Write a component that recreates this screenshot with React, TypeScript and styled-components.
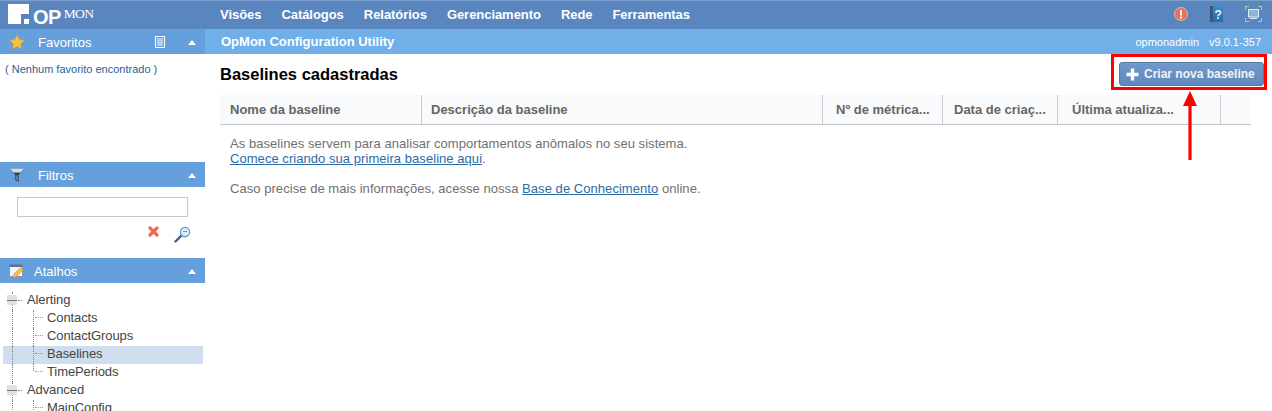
import React from "react";
import styled, { createGlobalStyle } from "styled-components";

const GlobalStyle = createGlobalStyle`
  html, body {
    margin: 0;
    padding: 0;
    background: #fff;
    font-family: "Liberation Sans", Arial, sans-serif;
    overflow: hidden;
  }
`;

const Page = styled.div`
  position: relative;
  width: 1272px;
  height: 411px;
  overflow: hidden;
  display: flex;
  flex-direction: column;
`;

const TopBar = styled.header`
  height: 29px;
  flex: none;
  display: flex;
  align-items: center;
  background: #5a86bf;
  border-top: 1px solid #7ba0cf;
  padding-bottom: 2px;
  box-sizing: border-box;
`;

const Logo = styled.div`
  width: 220px;
  flex: none;
  display: flex;
  align-items: center;
  padding-left: 8px;
  box-sizing: border-box;

  & > svg {
    margin-top: -1px;
  }
`;

const LogoOp = styled.span`
  font-size: 20px;
  line-height: 20px;
  font-weight: bold;
  color: #fff;
  margin-left: 4px;
  margin-top: 5px;
  letter-spacing: -0.6px;
`;

const LogoMon = styled.span`
  font-family: "Liberation Serif", serif;
  font-size: 13.5px;
  letter-spacing: -0.6px;
  color: #fff;
  margin-left: 3px;
  margin-top: -1px;
`;

const Nav = styled.nav`
  display: flex;
  gap: 20px;
  flex: 1;
`;

const NavItem = styled.a`
  color: #fff;
  font-size: 13px;
  font-weight: bold;
  letter-spacing: -0.05px;
`;

const TopIcons = styled.div`
  display: flex;
  align-items: center;
  padding-right: 10px;

  & > svg + svg {
    margin-left: 22px;
  }
`;

const Body = styled.div`
  flex: 1;
  display: flex;
  min-height: 0;
`;

const Sidebar = styled.aside`
  width: 205px;
  flex: none;
  display: flex;
  flex-direction: column;
  min-height: 0;
`;

const PanelHeader = styled.div`
  height: 25px;
  flex: none;
  display: flex;
  align-items: center;
  background: #659fdc;
  color: #fff;
  font-size: 13px;
  padding: 1px 9px 0 9px;
  box-sizing: border-box;
`;

const PanelIcon = styled.span<{ $gap: number }>`
  display: flex;
  width: 16px;
  margin-right: ${({ $gap }) => $gap}px;
`;

const PanelTitle = styled.span`
  flex: 1;
`;

const Caret = styled.span<{ $gap?: number }>`
  width: 0;
  height: 0;
  margin-left: ${({ $gap }) => $gap ?? 0}px;
  border-left: 4.5px solid transparent;
  border-right: 4.5px solid transparent;
  border-bottom: 5px solid #fff;
`;

const NoFavorites = styled.div`
  height: 108px;
  flex: none;
  box-sizing: border-box;
  padding: 9px 0 0 5px;
  font-size: 11px;
  color: #2a5f94;
`;

const FilterBody = styled.div`
  height: 71px;
  flex: none;
  box-sizing: border-box;
  padding: 10px 17px 0;
  display: flex;
  flex-direction: column;
`;

const FilterInput = styled.input`
  width: 171px;
  height: 20px;
  flex: none;
  box-sizing: border-box;
  border: 1px solid #c8c8c8;
  background: #fff;
  outline: none;
`;

const FilterActions = styled.div`
  display: flex;
  justify-content: flex-end;
  align-items: flex-start;
  gap: 15px;
  margin: 9px -3px 0 0;
`;

const Tree = styled.div`
  flex: none;
  padding: 9px 2px 0 3px;
  position: relative;
`;

const TreeRow = styled.div<{ $level: number; $selected?: boolean }>`
  position: relative;
  height: 18px;
  line-height: 16px;
  font-size: 13px;
  letter-spacing: -0.1px;
  color: #444;
  padding-left: ${({ $level }) => ($level === 0 ? 24 : 44)}px;
  background: ${({ $selected }) => ($selected ? "#cfdeee" : "transparent")};
`;

const TreeGuide = styled.span<{ $level: number; $last?: boolean }>`
  position: absolute;
  left: ${({ $level }) => ($level === 0 ? 9 : 30)}px;
  top: 0;
  height: ${({ $last }) => ($last ? "7px" : "18px")};
  border-left: 1px dotted #888;
`;

const TreeTick = styled.span`
  position: absolute;
  left: 32px;
  top: 7px;
  width: 8px;
  border-top: 1px dotted #999;
`;

const Minus = styled.span`
  position: absolute;
  left: 4px;
  top: 3px;
  width: 10px;
  height: 10px;
  background: #dde2e2;
  display: flex;
  align-items: center;

  &::before {
    content: "";
    width: 100%;
    height: 1px;
    background: #777;
  }

  &::after {
    content: "";
    position: absolute;
    left: 11px;
    top: 5px;
    width: 4px;
    border-top: 1px dotted #888;
  }
`;

const Main = styled.main`
  flex: 1;
  min-width: 0;
  display: flex;
  flex-direction: column;
`;

const UtilityBar = styled.div`
  height: 25px;
  flex: none;
  display: flex;
  align-items: center;
  justify-content: space-between;
  padding: 0 11px 0 16px;
  background: #70afe8;
  color: #fff;
`;

const UtilityTitle = styled.span`
  font-size: 13px;
  font-weight: bold;
`;

const UtilityMeta = styled.span`
  display: flex;
  gap: 10px;
  font-size: 11px;
`;

const Content = styled.div`
  padding: 7px 21px 0 15px;
`;

const TitleRow = styled.div`
  display: flex;
  align-items: center;
  justify-content: space-between;
  height: 26px;
  margin-right: -13px;
  margin-bottom: 8px;
`;

const Heading = styled.h1`
  margin: 0;
  font-size: 16.5px;
  font-weight: bold;
  color: #000;
`;

const NewButton = styled.button`
  width: 145px;
  height: 24px;
  display: flex;
  align-items: center;
  gap: 5px;
  padding: 0 0 0 6px;
  border: 1px solid #5577a3;
  border-radius: 3px;
  background: linear-gradient(#7099c9, #5f89bc);
  color: #eef3f9;
  font-family: inherit;
  font-size: 12px;
  font-weight: bold;
`;

const TableHead = styled.div`
  display: flex;
  height: 30px;
  background: #f8fafb;
  border-bottom: 1px solid #c5c5c5;
  box-sizing: border-box;
`;

const HeadCell = styled.div<{ $width: number; $pad: number }>`
  width: ${({ $width }) => $width}px;
  flex: none;
  box-sizing: border-box;
  padding-left: ${({ $pad }) => $pad}px;
  line-height: 29px;
  font-size: 13px;
  font-weight: bold;
  color: #666;
  border-right: 1px solid #c9cdd1;
  overflow: hidden;
  white-space: nowrap;

  &:last-child {
    border-right: none;
  }
`;

const Message = styled.div`
  padding: 11px 0 0 10px;
  font-size: 13px;
  letter-spacing: 0.05px;
  line-height: 15px;
  color: #707070;
`;

const Paragraph = styled.p`
  margin: 0 0 15px;
`;

const TextLink = styled.a`
  color: #2b6ca8;
  text-decoration: underline;
`;

const Highlight = styled.div`
  position: absolute;
  left: 1111px;
  top: 54px;
  width: 156px;
  height: 36px;
  box-sizing: border-box;
  border: 3px solid #f00;
`;

const Arrow = styled.svg`
  position: absolute;
  left: 1182px;
  top: 91px;
`;

const StarIcon = () => (
  <svg width="16" height="16" viewBox="0 0 16 16">
    <path d="M8 0.8l2.3 4.8 5.2.7-3.8 3.6.9 5.2L8 12.6l-4.6 2.5.9-5.2L.5 6.3l5.2-.7z" fill="#f3c246" stroke="#d99b2c" strokeWidth="0.6" />
  </svg>
);

const FunnelIcon = () => (
  <svg width="16" height="16" viewBox="0 0 16 16">
    <path d="M1 1.5h14l-5 6v7.5l-4-2V7.5z" fill="#2f4358" />
    <path d="M1 1.5h14l-3.5 4h-7z" fill="#d5dee6" />
    <path d="M6.5 8.5l3-.5v6l-3-1.5z" fill="#4f7fb0" />
  </svg>
);

const NoteIcon = () => (
  <svg width="16" height="16" viewBox="0 0 16 16">
    <rect x="0.5" y="1.5" width="13" height="12" fill="#f3f6fa" stroke="#8a9aad" />
    <rect x="0.5" y="1.5" width="13" height="2.5" fill="#4d76a8" />
    <path d="M4 15l1-4 6.5-6.5 2.5 2.5L7.5 13.5z" fill="#f2c14e" stroke="#c8872a" strokeWidth="0.5" />
  </svg>
);

const ListIcon = () => (
  <svg width="10" height="12" viewBox="0 0 10 12">
    <rect x="0.5" y="0.5" width="9" height="11" fill="none" stroke="#fff" />
    <path d="M2 3h6M2 5h6M2 7h6M2 9h6" stroke="#fff" />
  </svg>
);

const LogoMark = () => (
  <svg width="21" height="20" viewBox="0 0 21 20">
    <path d="M0 0h21v10h-8v10H0z" fill="#fff" />
    <rect x="16" y="15" width="5" height="5" fill="#fff" />
  </svg>
);

const AlertIcon = () => (
  <svg width="14" height="14" viewBox="0 0 14 14">
    <circle cx="7" cy="7" r="6.5" fill="#e8705f" stroke="#f0b0a6" />
    <rect x="6" y="3" width="2" height="5.5" fill="#fff" />
    <rect x="6" y="9.5" width="2" height="2" fill="#fff" />
  </svg>
);

const HelpIcon = () => (
  <svg width="13" height="16" viewBox="0 0 13 16">
    <defs>
      <linearGradient id="helpCover" x1="0" y1="0" x2="0" y2="1">
        <stop offset="0" stopColor="#3f8ccb" />
        <stop offset="1" stopColor="#1f6cae" />
      </linearGradient>
    </defs>
    <rect width="13" height="16" fill="url(#helpCover)" />
    <rect width="3" height="16" fill="#3a5878" />
    <text x="4.5" y="13" fontFamily="Liberation Sans" fontSize="12" fontWeight="bold" fill="#e8f2fa">?</text>
  </svg>
);

const ScreenIcon = () => (
  <svg width="17" height="16" viewBox="0 0 17 16" fill="none">
    <path d="M0.5 4V0.5H4M13 0.5h3.5V4M16.5 12v3.5H13M4 15.5H0.5V12" stroke="#b5d28a" strokeWidth="1" />
    <rect x="3.5" y="3.5" width="10" height="7.5" fill="#8fb4da" stroke="#e3ebf3" />
    <path d="M5 12.5h7" stroke="#dfe8f2" />
  </svg>
);

const ClearIcon = () => (
  <svg width="11" height="11" viewBox="0 0 11 11">
    <path d="M2 2l7 7M9 2l-7 7" stroke="#ea6a58" strokeWidth="3.2" strokeLinecap="round" />
  </svg>
);

const SearchIcon = () => (
  <svg width="17" height="17" viewBox="0 0 17 17">
    <path d="M1.5 15.5l6-6" stroke="#2f5f9a" strokeWidth="2.4" strokeLinecap="round" />
    <circle cx="11" cy="6" r="4.6" fill="#dcebf7" stroke="#6d97c4" strokeWidth="1.2" />
    <path d="M9 5.5h4" stroke="#6d97c4" />
  </svg>
);

const PlusIcon = () => (
  <svg width="13" height="13" viewBox="0 0 13 13">
    <path d="M6.5 0.5v12M0.5 6.5h12" stroke="#fff" strokeWidth="3.4" />
  </svg>
);

const menu = ["Visões", "Catálogos", "Relatórios", "Gerenciamento", "Rede", "Ferramentas"];

const columns = [
  { label: "Nome da baseline", width: 202, pad: 10 },
  { label: "Descrição da baseline", width: 401, pad: 9 },
  { label: "Nº de métrica...", width: 120, pad: 13 },
  { label: "Data de criaç...", width: 115, pad: 11 },
  { label: "Última atualiza...", width: 163, pad: 14 },
  { label: "", width: 30, pad: 0 },
];

const tree = [
  { label: "Alerting", level: 0 },
  { label: "Contacts", level: 1 },
  { label: "ContactGroups", level: 1 },
  { label: "Baselines", level: 1, selected: true },
  { label: "TimePeriods", level: 1, last: true },
  { label: "Advanced", level: 0 },
  { label: "MainConfig", level: 1 },
];

const App = () => (
  <>
    <GlobalStyle />
    <Page>
      <TopBar>
        <Logo>
          <LogoMark />
          <LogoOp>OP</LogoOp>
          <LogoMon>MON</LogoMon>
        </Logo>
        <Nav>
          {menu.map((item) => (
            <NavItem key={item}>{item}</NavItem>
          ))}
        </Nav>
        <TopIcons>
          <AlertIcon />
          <HelpIcon />
          <ScreenIcon />
        </TopIcons>
      </TopBar>
      <Body>
        <Sidebar>
          <PanelHeader>
            <PanelIcon $gap={13}>
              <StarIcon />
            </PanelIcon>
            <PanelTitle>Favoritos</PanelTitle>
            <ListIcon />
            <Caret $gap={23} />
          </PanelHeader>
          <NoFavorites>( Nenhum favorito encontrado )</NoFavorites>
          <PanelHeader>
            <PanelIcon $gap={13}>
              <FunnelIcon />
            </PanelIcon>
            <PanelTitle>Filtros</PanelTitle>
            <Caret />
          </PanelHeader>
          <FilterBody>
            <FilterInput />
            <FilterActions>
              <ClearIcon />
              <SearchIcon />
            </FilterActions>
          </FilterBody>
          <PanelHeader>
            <PanelIcon $gap={9}>
              <NoteIcon />
            </PanelIcon>
            <PanelTitle>Atalhos</PanelTitle>
            <Caret />
          </PanelHeader>
          <Tree>
            {tree.map((row) => (
              <TreeRow key={row.label} $level={row.level} $selected={row.selected}>
                <TreeGuide $level={0} />
                {row.level === 0 ? (
                  <Minus />
                ) : (
                  <>
                    <TreeGuide $level={1} $last={row.last} />
                    <TreeTick />
                  </>
                )}
                {row.label}
              </TreeRow>
            ))}
          </Tree>
        </Sidebar>
        <Main>
          <UtilityBar>
            <UtilityTitle>OpMon Configuration Utility</UtilityTitle>
            <UtilityMeta>
              <span>opmonadmin</span>
              <span>v9.0.1-357</span>
            </UtilityMeta>
          </UtilityBar>
          <Content>
            <TitleRow>
              <Heading>Baselines cadastradas</Heading>
              <NewButton>
                <PlusIcon />
                Criar nova baseline
              </NewButton>
            </TitleRow>
            <TableHead>
              {columns.map((col, i) => (
                <HeadCell key={i} $width={col.width} $pad={col.pad}>
                  {col.label}
                </HeadCell>
              ))}
            </TableHead>
            <Message>
              <Paragraph>
                As baselines servem para analisar comportamentos anômalos no seu sistema.
                <br />
                <TextLink>Comece criando sua primeira baseline aqui</TextLink>.
              </Paragraph>
              <Paragraph>
                Caso precise de mais informações, acesse nossa <TextLink>Base de Conhecimento</TextLink> online.
              </Paragraph>
            </Message>
          </Content>
        </Main>
      </Body>
      <Highlight />
      <Arrow width="16" height="69" viewBox="0 0 16 69">
        <path d="M8 0L15 15H9.6V69H6.4V15H1z" fill="#f00" />
      </Arrow>
    </Page>
  </>
);

export default App;
